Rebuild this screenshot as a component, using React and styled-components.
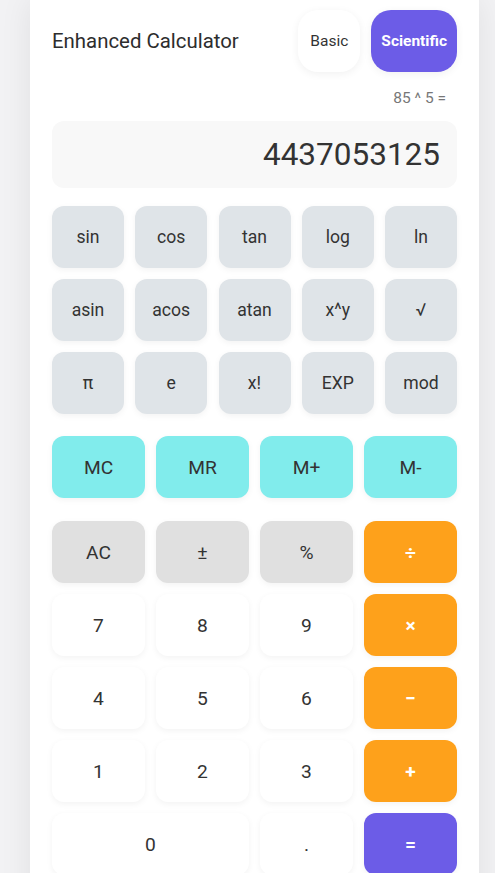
import React from "react";
import styled, { createGlobalStyle } from "styled-components";

const sciKeys = ["sin", "cos", "tan", "log", "ln", "asin", "acos", "atan", "x^y", "√", "π", "e", "x!", "EXP", "mod"];
const memKeys = ["MC", "MR", "M+", "M-"];
const mainKeys = [
    { label: "AC", kind: "fn" },
    { label: "±", kind: "fn" },
    { label: "%", kind: "fn" },
    { label: "÷", kind: "op" },
    { label: "7" }, { label: "8" }, { label: "9" },
    { label: "×", kind: "op" },
    { label: "4" }, { label: "5" }, { label: "6" },
    { label: "−", kind: "op" },
    { label: "1" }, { label: "2" }, { label: "3" },
    { label: "+", kind: "op" },
    { label: "0", wide: true },
    { label: "." },
    { label: "=", kind: "eq" },
];

const App = () => (
    <>
        <GlobalStyle />
        <Page>
            <Card>
                <Header>
                    <Title>Enhanced Calculator</Title>
                    <ModeSwitch>
                        <ModeButton>Basic</ModeButton>
                        <ModeButton active>Scientific</ModeButton>
                    </ModeSwitch>
                </Header>
                <Expression>85 ^ 5 =</Expression>
                <Display>4437053125</Display>
                <SciGrid>
                    {sciKeys.map((k) => (
                        <SciKey key={k}>{k}</SciKey>
                    ))}
                </SciGrid>
                <MemRow>
                    {memKeys.map((k) => (
                        <MemKey key={k}>{k}</MemKey>
                    ))}
                </MemRow>
                <Keypad>
                    {mainKeys.map((k) => (
                        <Key key={k.label} kind={k.kind} wide={k.wide}>
                            {k.label}
                        </Key>
                    ))}
                </Keypad>
            </Card>
        </Page>
    </>
);

const GlobalStyle = createGlobalStyle`
  body {
    margin: 0;
    background: #f2f2f4;
    font-family: Roboto, "Liberation Sans", sans-serif;
    color: #333;
  }
`

const Page = styled.div`
    padding: 0 16px 0 30px;
    height: 873px;
    overflow: hidden;
`

const Card = styled.div`
    width: 449px;
    box-sizing: border-box;
    background: #fff;
    padding: 10px 22px 40px;
    box-shadow: 0 0 30px rgba(0, 0, 0, 0.08);
`

const Header = styled.div`
    display: flex;
    align-items: center;
    justify-content: space-between;
`

const Title = styled.h1`
    margin: 0;
    font-size: 20.4px;
    font-weight: 400;
    color: #2d2d2d;
`

const ModeSwitch = styled.div`
    display: flex;
    gap: 11px;
`

const ModeButton = styled.button`
    height: 62px;
    padding: 0 10px;
    min-width: 62px;
    border: none;
    border-radius: 20px;
    font-family: inherit;
    font-size: 15.5px;
    font-weight: ${(p) => (p.active ? 700 : 400)};
    color: ${(p) => (p.active ? "#fff" : "#333")};
    background: ${(p) => (p.active ? "#6c5ce7" : "#fff")};
    box-shadow: 0 2px 8px rgba(0, 0, 0, 0.06);
`

const Expression = styled.div`
    text-align: right;
    font-size: 15.5px;
    color: #777;
    margin: 16px 11px 0 0;
    line-height: 20px;
`

const Display = styled.div`
    margin-top: 13px;
    height: 67px;
    background: #f8f8f8;
    border-radius: 12px;
    display: flex;
    align-items: center;
    justify-content: flex-end;
    padding: 0 17px;
    font-size: 31.5px;
    color: #333;
`

const KeyBase = styled.button`
    height: 62px;
    border: none;
    border-radius: 12px;
    font-family: inherit;
    color: #333;
    box-shadow: 0 2px 6px rgba(0, 0, 0, 0.05);
`

const SciGrid = styled.div`
    margin-top: 18px;
    display: grid;
    grid-template-columns: repeat(5, 1fr);
    gap: 11px 11.25px;
`

const SciKey = styled(KeyBase)`
    background: #dfe4e8;
    font-size: 17.6px;
`

const MemRow = styled.div`
    margin-top: 22px;
    display: grid;
    grid-template-columns: repeat(4, 1fr);
    gap: 11px;
`

const MemKey = styled(KeyBase)`
    background: #81ecec;
    font-size: 19.2px;
`

const keyColors = {
    fn: ["#e0e0e0", "#333"],
    op: ["#fea11b", "#fff"],
    eq: ["#6c5ce7", "#fff"],
};

const Keypad = styled.div`
    margin-top: 23px;
    display: grid;
    grid-template-columns: repeat(4, 1fr);
    gap: 11px;
`

const Key = styled(KeyBase)`
    grid-column: ${(p) => (p.wide ? "span 2" : "auto")};
    font-size: 19.2px;
    font-weight: ${(p) => (p.kind === "op" || p.kind === "eq" ? 700 : 400)};
    background: ${(p) => (keyColors[p.kind] || ["#fff"])[0]};
    color: ${(p) => (keyColors[p.kind] || ["", "#333"])[1]};
`

export default App;
